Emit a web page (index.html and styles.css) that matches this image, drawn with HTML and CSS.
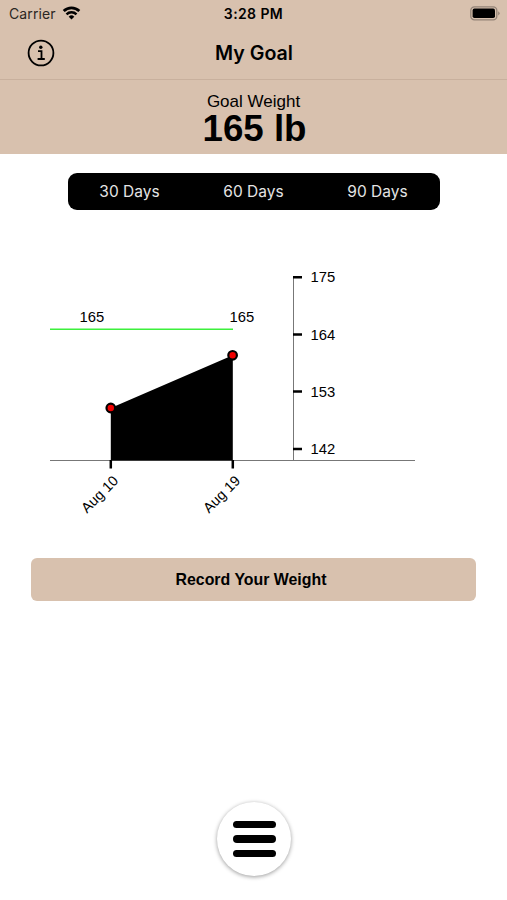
FILE: index.html
```html
<!DOCTYPE html>
<html lang="en">
<head>
    <meta charset="UTF-8">
    <meta name="viewport" content="width=device-width, initial-scale=1.0">
    <title>My Goal</title>
    <link rel="stylesheet" href="styles.css">
</head>
<body>
    <div class="screen">
        <!-- Status bar -->
        <div class="status-bar">
            <div class="carrier">
                <span>Carrier</span>
                <svg width="19" height="14" viewBox="0 0 18 14">
                    <path d="M1.2 5.1a11.2 11.2 0 0 1 15.6 0" fill="none" stroke="#000" stroke-width="2.8"/>
                    <path d="M4 8.3a7.2 7.2 0 0 1 10 0" fill="none" stroke="#000" stroke-width="2.5"/>
                    <path d="M9 13.5L6.2 10.7a4 4 0 0 1 5.6 0z"/>
                </svg>
            </div>
            <div class="time">3:28 PM</div>
            <div class="battery">
                <svg width="30" height="15" viewBox="0 0 30 15">
                    <rect x="0.8" y="0.8" width="26" height="13" rx="3.6" fill="none" stroke="#938377" stroke-width="1.3"/>
                    <rect x="2.6" y="2.6" width="22.4" height="9.4" rx="1.8"/>
                    <path d="M28.2 5.2q1.4 0.8 1.4 2.1t-1.4 2.1z" fill="#938377"/>
                </svg>
            </div>
        </div>

        <!-- Navigation -->
        <div class="nav">
            <svg class="info" width="28" height="28" viewBox="0 0 28 28" fill="none" stroke="#000">
                <circle cx="14" cy="14" r="12.4" stroke-width="1.8"/>
                <circle cx="13.8" cy="8.2" r="1.7" fill="#000" stroke="none"/>
                <path d="M11 12.2h3.5v7.6M10.6 20h7.2" stroke-width="1.8"/>
            </svg>
            <h1>My Goal</h1>
        </div>

        <!-- Goal -->
        <div class="goal">
            <div class="goal-label">Goal Weight</div>
            <div class="goal-value">165 lb</div>
        </div>

        <div class="periods">
            <button>30 Days</button>
            <button>60 Days</button>
            <button>90 Days</button>
        </div>

        <!-- Weight chart -->
        <svg class="chart" width="507" height="270" viewBox="0 0 507 270">
            <path class="axis" d="M50 200.5H415M293.5 17V200"/>
            <path class="tick" d="M293 17.2h9M293 74.5h9M293 131.5h9M293 189h9M110.8 200v8.5M232.8 200v8.5"/>
            <path class="area" d="M110.8 148L232.8 95.3V200.5H110.8z"/>
            <path class="target" d="M50 69.2H233"/>
            <circle class="point" cx="110.8" cy="148" r="4.3"/>
            <circle class="point" cx="232.6" cy="95.3" r="4.3"/>
            <text x="79.5" y="62.3">165</text>
            <text x="229.5" y="62.3">165</text>
            <text x="310.5" y="22.3">175</text>
            <text x="310.5" y="79.5">164</text>
            <text x="310.5" y="136.6">153</text>
            <text x="310.5" y="194">142</text>
            <text class="date" transform="translate(116.5 219) rotate(-45)">Aug 10</text>
            <text class="date" transform="translate(238.5 219) rotate(-45)">Aug 19</text>
        </svg>

        <button class="record">Record Your Weight</button>

        <button class="menu" aria-label="Menu">
            <span></span>
            <span></span>
            <span></span>
        </button>
    </div>
</body>
</html>
```
FILE: styles.css
```css
body {
    font-family: 'Liberation Sans', Arial, sans-serif;
    margin: 0;
    background: #fff;
    color: #000;
}

button {
    border: none;
    padding: 0;
    font-family: inherit;
    cursor: pointer;
}

.screen {
    display: flex;
    flex-direction: column;
    width: 507px;
    height: 900px;
    overflow: hidden;
}

.status-bar {
    display: grid;
    grid-template-columns: 1fr auto 1fr;
    align-items: center;
    height: 27px;
    padding: 0 7px 0 9px;
    background: #d8c1ae;
    font-family: Inter, sans-serif;
    font-size: 14px;
}

.carrier {
    display: flex;
    align-items: center;
    gap: 6px;
    color: #2b2723;
    letter-spacing: 0.1px;
}

.carrier svg {
    margin-top: -2px;
}

.time {
    margin-right: 2px;
    font-weight: 600;
    letter-spacing: 0.4px;
}

.battery {
    display: flex;
    justify-content: flex-end;
}

.nav {
    display: grid;
    grid-template-columns: 1fr auto 1fr;
    align-items: center;
    height: 52px;
    padding: 0 27px;
    background: #d8c1ae;
    border-bottom: 1px solid #c8b09d;
}

.nav h1 {
    margin: 0;
    padding-left: 1px;
    font-family: Inter, sans-serif;
    font-size: 19.6px;
    font-weight: 600;
}

.goal {
    box-sizing: border-box;
    height: 74px;
    padding-top: 12px;
    background: #d8c1ae;
    text-align: center;
}

.goal-label {
    font-size: 17px;
    line-height: 19px;
}

.goal-value {
    padding-left: 2px;
    font-size: 36.7px;
    font-weight: bold;
    line-height: 35px;
}

.periods {
    display: flex;
    width: 372px;
    height: 37px;
    margin: 19px auto 0 68px;
    background: #000;
    border-radius: 9px;
}

.periods button {
    flex: 1;
    padding: 0 1px 0 0;
    background: none;
    color: #e4e4e4;
    font-family: Inter, sans-serif;
    font-size: 15.5px;
}

.chart {
    flex: none;
    margin-top: 50px;
}

.chart text {
    font-size: 14.8px;
}

.chart .date {
    font-size: 14.3px;
    text-anchor: end;
    dominant-baseline: middle;
}

.axis {
    fill: none;
    stroke: #777;
    stroke-width: 1;
}

.tick {
    fill: none;
    stroke: #000;
    stroke-width: 2.5;
}

.target {
    stroke: #3cf03c;
    stroke-width: 1.6;
}

.point {
    fill: #f00000;
    stroke: #000;
    stroke-width: 2.2;
}

.record {
    flex: none;
    width: 445px;
    height: 43px;
    margin: 28px 0 0 31px;
    padding-right: 5px;
    background: #d8c1ae;
    border-radius: 6px;
    color: #000;
    font-size: 15.9px;
    font-weight: bold;
}

.menu {
    display: flex;
    flex: none;
    flex-direction: column;
    align-items: center;
    justify-content: center;
    gap: 7px;
    width: 74px;
    height: 74px;
    margin: 201px auto 0 217px;
    background: #fff;
    border-radius: 50%;
    box-shadow: 0 1px 4px rgba(0, 0, 0, 0.4);
}

.menu span {
    width: 43px;
    height: 7.6px;
    background: #000;
    border-radius: 4px;
}
```
